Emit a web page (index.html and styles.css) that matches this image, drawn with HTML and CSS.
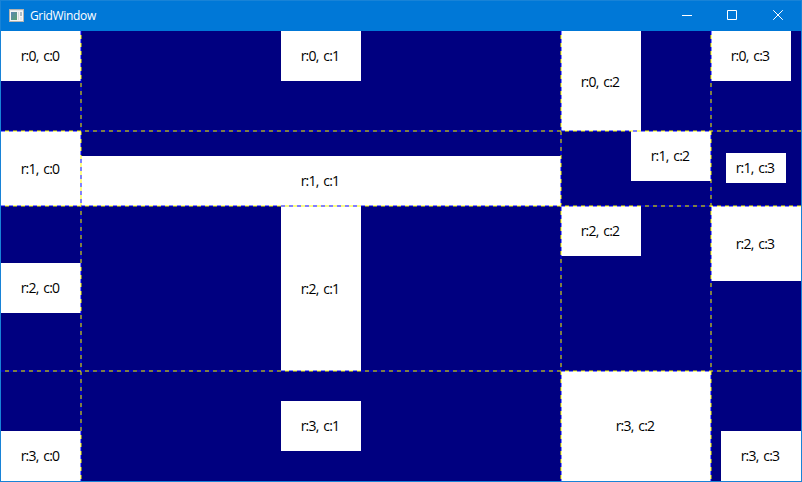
FILE: index.html
```html
<!DOCTYPE html>
<html lang="en">
<head>
<meta charset="utf-8">
<title>GridWindow</title>
<link rel="stylesheet" href="styles.css">
</head>
<body>
<div class="window">
  <header class="titlebar">
    <svg class="app-icon" width="16" height="14" viewBox="0 0 16 14">
      <defs><linearGradient id="pane" x1="0" y1="0" x2="1" y2="1"><stop offset="0" stop-color="#5a86b4"/><stop offset="1" stop-color="#58a070"/></linearGradient></defs>
      <rect x="0.5" y="0.5" width="14" height="12" fill="#f4f4f4" stroke="#b3b3b0"/>
      <rect x="1" y="1" width="13" height="1" fill="#dfe3e6"/>
      <rect x="2" y="3" width="6" height="8" fill="url(#pane)"/>
      <rect x="9" y="3" width="1" height="8" fill="#d5dadd"/>
      <rect x="11" y="3" width="2" height="4" fill="#a9bcc6"/>
      <rect x="11" y="8" width="2" height="3" fill="#dfe5e8"/>
    </svg>
    <span class="title">GridWindow</span>
    <div class="controls">
      <svg width="46" height="30" viewBox="0 0 46 30"><path d="M18 14.5h10" /></svg>
      <svg width="46" height="30" viewBox="0 0 46 30"><path d="M17.5 9.5h9v9h-9z" /></svg>
      <svg width="46" height="30" viewBox="0 0 46 30"><path d="M17.2 9.2l9.6 9.6M26.8 9.2l-9.6 9.6" /></svg>
    </div>
  </header>
  <main class="grid">
    <div class="cell top">r:0, c:0</div>
    <div class="cell top center">r:0, c:1</div>
    <div class="cell left tall low-text">r:0, c:2</div>
    <div class="cell top left">r:0, c:3</div>

    <div class="cell fill">r:1, c:0</div>
    <div class="cell wide bottom">r:1, c:1</div>
    <div class="cell top right">r:1, c:2</div>
    <div class="cell inset">r:1, c:3</div>

    <div class="cell middle raised">r:2, c:0</div>
    <div class="cell center tall">r:2, c:1</div>
    <div class="cell top left">r:2, c:2</div>
    <div class="cell wide top high">r:2, c:3</div>

    <div class="cell bottom">r:3, c:0</div>
    <div class="cell center middle">r:3, c:1</div>
    <div class="cell fill">r:3, c:2</div>
    <div class="cell bottom right">r:3, c:3</div>

    <i class="line col c1"></i><i class="line col c2"></i><i class="line col c3"></i>
    <i class="line row r1"></i><i class="line row r2"></i><i class="line row r3"></i>
  </main>
</div>
</body>
</html>
```
FILE: styles.css
```css
* { box-sizing: border-box; }
body { margin: 0; overflow: hidden; }
.window {
  width: 802px;
  height: 482px;
  border: 1px solid #1883d7;
  background: #0078d7;
  font-family: "Open Sans", "Noto Sans", sans-serif;
}
.titlebar {
  display: flex;
  align-items: center;
  height: 30px;
  padding-left: 8px;
  color: #fff;
}
.title {
  margin-left: 5px;
  font-size: 12px;
  line-height: 28px;
  letter-spacing: -0.35px;
}
.controls { display: flex; margin-left: auto; margin-right: -1px; }
.controls svg { display: block; flex: none; fill: none; stroke: #fff; stroke-width: 1; }
.grid {
  position: relative;
  display: grid;
  grid-template-columns: 80px 480px 150px 90px;
  grid-template-rows: 100px 75px 165px 110px;
  background: #000080;
}
.cell {
  display: flex;
  align-items: center;
  justify-content: center;
  width: 80px;
  height: 50px;
  padding-right: 2px;
  background: #fff;
  color: #000;
  font-size: 14px;
  line-height: 20px;
  letter-spacing: -0.8px;
  word-spacing: 2px;
  white-space: nowrap;
}
.top { align-self: start; }
.middle { align-self: center; }
.bottom { align-self: end; }
.left { justify-self: start; }
.center { justify-self: center; }
.right { justify-self: end; }
.tall { height: 100%; }
.wide { width: 100%; }
.fill { width: 100%; height: 100%; }
.high { height: 75px; }
.raised { margin-bottom: 1px; }
.low-text { padding-top: 2px; }
.inset { width: 60px; height: 30px; margin: 22px 15px; }
.line { position: absolute; opacity: 0.5; }
.col {
  top: 0;
  bottom: 0;
  width: 2px;
  background: repeating-linear-gradient(to bottom, #00f 0 4px, #ff0 4px 8px);
}
.row {
  left: 0;
  right: 0;
  height: 2px;
  background: repeating-linear-gradient(to right, #00f 0 4px, #ff0 4px 8px);
}
.c1 { left: 79px; }
.c2 { left: 559px; }
.c3 { left: 709px; }
.r1 { top: 99px; }
.r2 { top: 174px; }
.r3 { top: 339px; }
```
